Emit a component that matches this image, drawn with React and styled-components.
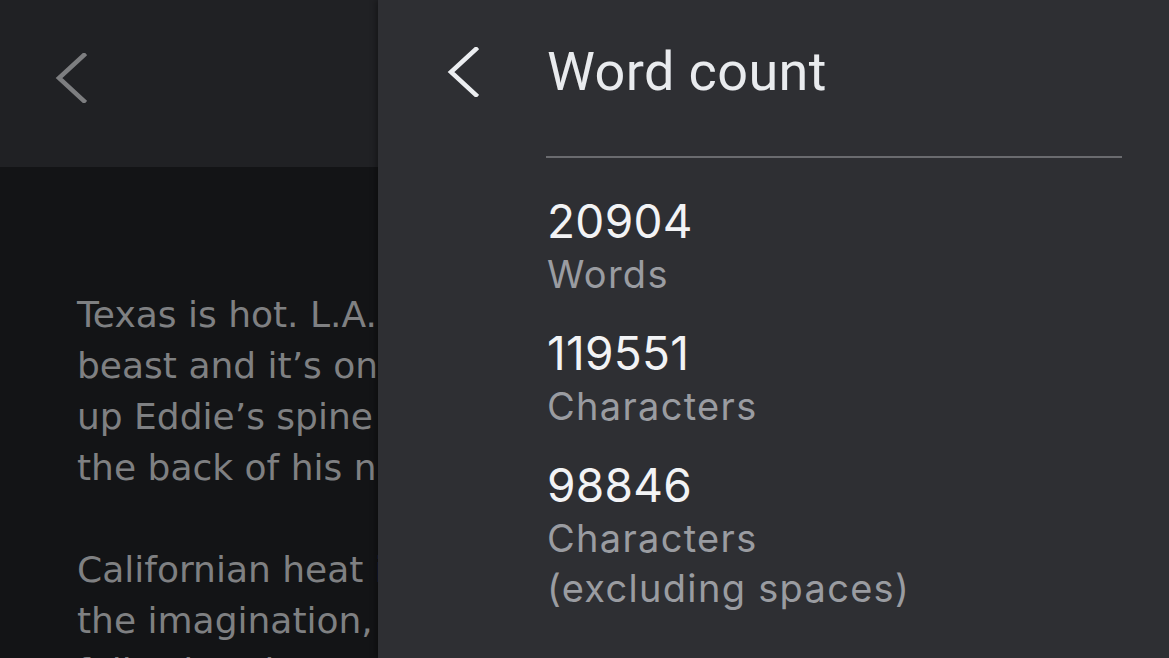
import React from "react";
import styled, { createGlobalStyle } from "styled-components";

const GlobalStyle = createGlobalStyle`
  html, body {
    margin: 0;
    padding: 0;
    background: #131416;
    overflow: hidden;
  }
`;

const paragraphs = [
  [
    "Texas is hot. L.A. is hotter, a different kind of",
    "beast and it’s one that crawls slowly",
    "up Eddie’s spine and settles into",
    "the back of his neck like a hand.",
  ],
  [
    "Californian heat is dry and cruel beyond",
    "the imagination, a thing that keeps",
    "following the sun down the coast.",
  ],
];

const stats = [
  { value: "20904", label: ["Words"] },
  { value: "119551", label: ["Characters"] },
  { value: "98846", label: ["Characters", "(excluding spaces)"] },
];

const Chevron = ({ color }) => (
  <svg width="32" height="50" viewBox="0 0 32 50" fill="none">
    <polyline
      points="29,2 4,25 29,48"
      stroke={color}
      strokeWidth="4.5"
      strokeLinecap="square"
      strokeLinejoin="miter"
    />
  </svg>
);

const App = () => {
  return (
    <Screen>
      <GlobalStyle />
      <Document>
        <DocBar>
          <BackButton $left={55} $top={53}>
            <Chevron color="#7d7e80" />
          </BackButton>
        </DocBar>
        <DocBody>
          {paragraphs.map((lines, i) => (
            <Paragraph key={i}>
              {lines.map((line) => (
                <Line key={line}>{line}</Line>
              ))}
            </Paragraph>
          ))}
        </DocBody>
      </Document>

      <Sheet>
        <SheetHeader>
          <BackButton $left={69} $top={0}>
            <Chevron color="#eceef1" />
          </BackButton>
          <Title>Word count</Title>
        </SheetHeader>
        <Divider />
        <StatList>
          {stats.map((s) => (
            <Stat key={s.value}>
              <Value>{s.value}</Value>
              {s.label.map((l) => (
                <Label key={l}>{l}</Label>
              ))}
            </Stat>
          ))}
        </StatList>
      </Sheet>
    </Screen>
  );
};

const Screen = styled.div`
  position: relative;
  width: 1169px;
  height: 658px;
  overflow: hidden;
  background: #131416;
`;

const Document = styled.div`
  display: flex;
  flex-direction: column;
  height: 100%;
`;

const DocBar = styled.div`
  height: 167px;
  flex-shrink: 0;
  background: #202124;
  display: flex;
  align-items: flex-start;
`;

const BackButton = styled.div`
  display: flex;
  margin-left: ${(p) => p.$left}px;
  margin-top: ${(p) => p.$top}px;
  flex-shrink: 0;
`;

const DocBody = styled.div`
  flex-shrink: 0;
  padding: 122px 0 0 77px;
  font-family: "DejaVu Sans", Verdana, sans-serif;
  font-size: 36px;
  line-height: 51px;
  color: #7f8082;
`;

const Paragraph = styled.div`
  margin-bottom: 51px;
`;

const Line = styled.div`
  white-space: nowrap;
`;

const Sheet = styled.div`
  position: absolute;
  top: 0;
  right: 0;
  bottom: 0;
  left: 378px;
  background: #2e2f33;
  box-shadow: -2px 0 6px rgba(0, 0, 0, 0.35);
`;

const SheetHeader = styled.div`
  height: 144px;
  display: flex;
  align-items: center;
  gap: 68px;
`;

const Title = styled.div`
  font-family: Roboto, "Liberation Sans", sans-serif;
  font-size: 54px;
  line-height: 1;
  color: #e9ebee;
  letter-spacing: 0.4px;
`;

const Divider = styled.div`
  margin: 12px 47px 0 168px;
  height: 2px;
  background: #6a6b6f;
`;

const StatList = styled.div`
  display: flex;
  flex-direction: column;
  gap: 26px;
  padding: 35px 0 0 169px;
  font-family: Inter, "Liberation Sans", sans-serif;
`;

const Stat = styled.div`
  display: flex;
  flex-direction: column;
`;

const Value = styled.div`
  font-size: 46px;
  line-height: 56px;
  color: #f2f3f5;
  letter-spacing: 0.3px;
`;

const Label = styled.div`
  font-size: 38px;
  line-height: 50px;
  color: #9a9ca1;
  letter-spacing: 1.3px;
`;

export default App;
